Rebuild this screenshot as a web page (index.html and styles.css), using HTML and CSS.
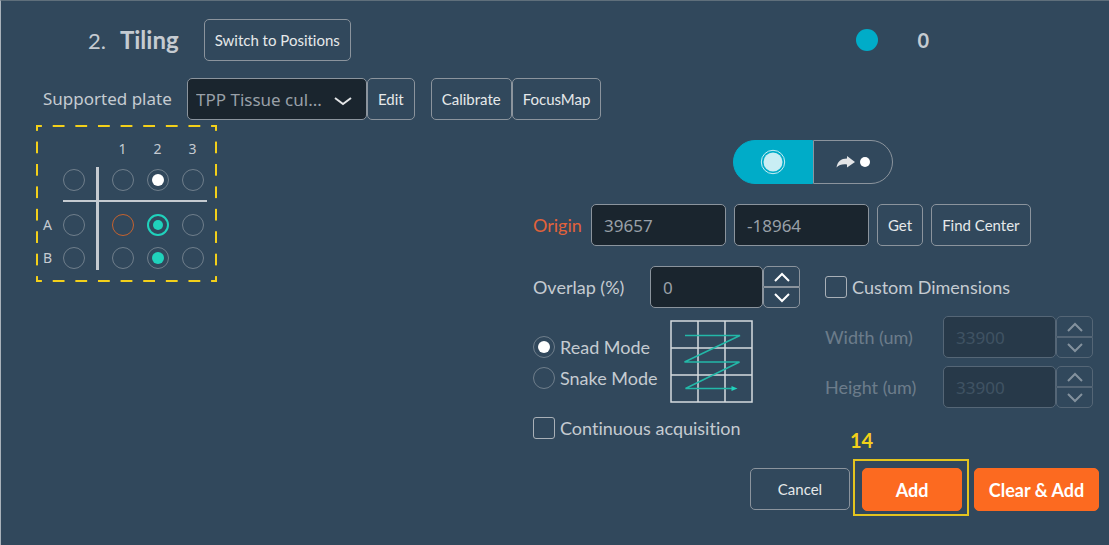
FILE: index.html
```
<!DOCTYPE html>
<html lang="en">
<head>
    <meta charset="UTF-8">
    <meta name="viewport" content="width=device-width, initial-scale=1.0">
    <title>Tiling</title>
    <link rel="stylesheet" href="styles.css">
</head>
<body>
    <header class="header">
        <h1 class="title"><span class="step">2.</span>Tiling</h1>
        <button type="button" class="btn">Switch to Positions</button>
        <div class="counter"><span class="counter-dot"></span>0</div>
    </header>

    <div class="plate-bar">
        <label for="plate" class="plate-label">Supported plate</label>
        <div class="select">
            <select id="plate">
                <option>TPP Tissue cul...</option>
            </select>
            <svg viewBox="0 0 18 10" width="18" height="10" aria-hidden="true"><path d="M1 2l8 6 8-6"/></svg>
        </div>
        <button type="button" class="btn">Edit</button>
        <button type="button" class="btn calibrate">Calibrate</button>
        <button type="button" class="btn">FocusMap</button>
    </div>

    <main class="main">
        <!-- Well selection -->
        <section class="plate">
            <span class="col c1">1</span>
            <span class="col c2">2</span>
            <span class="col c3">3</span>

            <input type="checkbox" class="well all" aria-label="All wells">
            <input type="checkbox" class="well c1" aria-label="Column 1">
            <input type="checkbox" class="well c2" aria-label="Column 2" checked>
            <input type="checkbox" class="well c3" aria-label="Column 3">

            <span class="line-h"></span>
            <span class="line-v"></span>

            <span class="row row-a">A</span>
            <input type="checkbox" class="well row-a all" aria-label="Row A">
            <input type="checkbox" class="well row-a c1 origin-well" aria-label="A1">
            <input type="checkbox" class="well row-a c2 green current" aria-label="A2" checked>
            <input type="checkbox" class="well row-a c3" aria-label="A3">

            <span class="row row-b">B</span>
            <input type="checkbox" class="well row-b all" aria-label="Row B">
            <input type="checkbox" class="well row-b c1" aria-label="B1">
            <input type="checkbox" class="well row-b c2 green" aria-label="B2" checked>
            <input type="checkbox" class="well row-b c3" aria-label="B3">
        </section>

        <!-- Tiling settings -->
        <section class="settings">
            <div class="toggle">
                <button type="button" class="toggle-btn active" aria-label="Whole well">
                    <svg viewBox="0 0 26 26" width="26" height="26"><circle cx="13" cy="13" r="11.7" fill="none" stroke="#c9eef4" stroke-width="1"/><circle cx="13" cy="13" r="9.5" fill="#c9eef4"/></svg>
                </button>
                <button type="button" class="toggle-btn" aria-label="Move to position">
                    <svg viewBox="0 0 34 14" width="34" height="14"><path d="M.5 12.5C1.500 6.500 5 3.500 11 3.500V1l8 6-8 5.500V9.500C6.500 9 3 9.800.5 12.500z" fill="#e3e5e7"/><circle cx="29" cy="7" r="5" fill="#fff"/></svg>
                </button>
            </div>

            <div class="origin">
                <label for="origin-x" class="origin-label">Origin</label>
                <input type="text" id="origin-x" class="field" value="39657">
                <input type="text" class="field" aria-label="Origin Y" value="-18964">
                <button type="button" class="btn">Get</button>
                <button type="button" class="btn">Find Center</button>
            </div>

            <div class="columns">
                <div class="column-left">
                    <div class="number">
                        <label for="overlap">Overlap (%)</label>
                        <input type="text" id="overlap" class="field" value="0">
                        <div class="spinner">
                            <button type="button" aria-label="Increase overlap"><svg viewBox="0 0 16 10" width="16" height="10"><path d="M1 9l7-7 7 7"/></svg></button>
                            <button type="button" aria-label="Decrease overlap"><svg viewBox="0 0 16 10" width="16" height="10"><path d="M1 1l7 7 7-7"/></svg></button>
                        </div>
                    </div>

                    <div class="modes">
                        <div class="mode-list">
                            <label class="check"><input type="radio" name="mode" checked>Read Mode</label>
                            <label class="check"><input type="radio" name="mode">Snake Mode</label>
                        </div>
                        <svg class="path" viewBox="0 0 83 83" width="83" height="83" aria-hidden="true">
                            <path d="M1 1h81v81H1zM28 1v81M55 1v81M1 28h81M1 55h81" fill="none" stroke="#d5dade" stroke-width="1.500"/>
                            <path d="M15 15.500h55L14.500 42h55L15.500 68.500H63" fill="none" stroke="#23b8a8" stroke-width="1.500"/>
                            <path d="M61.500 66l6 2.500-6 2.500z" fill="#20d2bc"/>
                        </svg>
                    </div>

                    <label class="check"><input type="checkbox">Continuous acquisition</label>
                </div>

                <div class="column-right">
                    <label class="check custom"><input type="checkbox">Custom Dimensions</label>
                    <div class="number disabled">
                        <label for="width">Width (um)</label>
                        <input type="text" id="width" class="field" value="33900" disabled>
                        <div class="spinner">
                            <button type="button" aria-label="Increase width" disabled><svg viewBox="0 0 16 10" width="16" height="10"><path d="M1 9l7-7 7 7"/></svg></button>
                            <button type="button" aria-label="Decrease width" disabled><svg viewBox="0 0 16 10" width="16" height="10"><path d="M1 1l7 7 7-7"/></svg></button>
                        </div>
                    </div>
                    <div class="number disabled">
                        <label for="height">Height (um)</label>
                        <input type="text" id="height" class="field" value="33900" disabled>
                        <div class="spinner">
                            <button type="button" aria-label="Increase height" disabled><svg viewBox="0 0 16 10" width="16" height="10"><path d="M1 9l7-7 7 7"/></svg></button>
                            <button type="button" aria-label="Decrease height" disabled><svg viewBox="0 0 16 10" width="16" height="10"><path d="M1 1l7 7 7-7"/></svg></button>
                        </div>
                    </div>
                </div>
            </div>
        </section>
    </main>

    <footer class="footer">
        <button type="button" class="btn cancel">Cancel</button>
        <div class="marked">
            <span class="mark">14</span>
            <button type="button" class="btn primary">Add</button>
        </div>
        <button type="button" class="btn primary wide">Clear &amp; Add</button>
    </footer>
</body>
</html>
```
FILE: styles.css
```
* {
    box-sizing: border-box;
}

body {
    margin: 0;
    min-height: 100vh;
    padding: 18px 10px 20px 0;
    border-top: 1px solid #5f6f7b;
    border-left: 1px solid #a9b2ba;
    background: #31485c;
    color: #c5cbd1;
    font-family: Lato, sans-serif;
    font-size: 18px;
    line-height: 22px;
    font-variant-ligatures: none;
}

button,
input,
select {
    margin: 0;
    font-family: inherit;
    font-variant-ligatures: inherit;
}

/* BUTTONS */
.btn {
    height: 42px;
    padding: 0 10px;
    border: 1px solid #8b949d;
    border-radius: 5px;
    background: transparent;
    color: #e6e8ea;
    font-size: 15px;
    white-space: nowrap;
}

.primary {
    width: 100px;
    height: 43px;
    border-color: #fc6a20;
    background: #fc6a20;
    color: #fff;
    font-size: 18px;
    font-weight: bold;
}

.cancel {
    width: 100px;
}

.wide {
    width: 125px;
}

/* HEADER */
.header {
    display: flex;
    align-items: center;
    padding-left: 87px;
}

.title {
    margin: 0 25px 0 0;
    font-size: 24px;
}

.step {
    margin-right: 14px;
    font-size: 22px;
    font-weight: normal;
}

.counter {
    display: flex;
    align-items: center;
    gap: 39px;
    margin-left: auto;
    margin-right: 170px;
    font-size: 20px;
    font-weight: bold;
}

.counter-dot {
    width: 22px;
    height: 22px;
    border-radius: 50%;
    background: #00acc8;
}

/* PLATE BAR */
.plate-bar {
    display: flex;
    align-items: center;
    margin-top: 17px;
    padding-left: 42px;
}

.plate-label {
    width: 144px;
    font-family: "Noto Sans", sans-serif;
    font-size: 17px;
}

.select {
    position: relative;
    width: 180px;
}

.select select {
    width: 100%;
    height: 42px;
    padding: 0 8px;
    border: 1px solid #8b949d;
    border-radius: 5px;
    appearance: none;
    background: #1a252e;
    color: #99a0a8;
    font-family: "Noto Sans", sans-serif;
    font-size: 17px;
}

.select svg {
    position: absolute;
    top: 18px;
    right: 15px;
    fill: none;
    stroke: #e3e5e7;
    stroke-width: 2;
    pointer-events: none;
}

.calibrate {
    margin-left: 16px;
}

/* WELLS */
.main {
    display: flex;
    justify-content: space-between;
    align-items: flex-start;
    padding: 5px 6px 0 35px;
}

.plate {
    display: grid;
    grid-template-columns: 23px 30px 16px 35px 35px 35px;
    grid-template-rows: 24px 37px 6px 42px 24px;
    place-items: center;
    width: 181px;
    padding: 12px 0;
    font-family: "Noto Sans", sans-serif;
    font-size: 14px;
    /* long dashes, an L in every corner */
    background:
        linear-gradient(90deg, #f3d01a 6px, transparent 6px calc(100% - 6px), #f3d01a calc(100% - 6px)) top left / 23px 2px round no-repeat,
        linear-gradient(90deg, #f3d01a 6px, transparent 6px calc(100% - 6px), #f3d01a calc(100% - 6px)) bottom left / 23px 2px round no-repeat,
        linear-gradient(#f3d01a 6px, transparent 6px calc(100% - 6px), #f3d01a calc(100% - 6px)) top left / 2px 22px no-repeat round,
        linear-gradient(#f3d01a 6px, transparent 6px calc(100% - 6px), #f3d01a calc(100% - 6px)) top right / 2px 22px no-repeat round;
}

.row { grid-column: 1; }
.all { grid-column: 2; }
.c1 { grid-column: 4; }
.c2 { grid-column: 5; }
.c3 { grid-column: 6; }

.col { grid-row: 1; }
.well { grid-row: 2; }
.row-a { grid-row: 4; }
.row-b { grid-row: 5; }

.line-h {
    grid-area: 3 / 2 / 4 / 7;
    width: 144px;
    height: 2px;
    background: #c5cbd1;
}

.line-v {
    grid-area: 2 / 3 / 6 / 4;
    align-self: end;
    width: 3px;
    height: 103px;
    background: #c5cbd1;
}

.well,
.check input {
    display: grid;
    place-items: center;
    flex: none;
    width: 22px;
    height: 22px;
    border: 1px solid #6f7e8b;
    border-radius: 50%;
    appearance: none;
}

.well:checked::before,
.check input:checked::before {
    content: '';
    width: 12px;
    height: 12px;
    border-radius: 50%;
    background: #fff;
}

.green:checked::before {
    background: #20d2bc;
}

.current {
    border: 2px solid #20d2bc;
}

.current:checked::before {
    width: 10px;
    height: 10px;
}

.origin-well {
    border-color: #c4622f;
}

/* SETTINGS */
.settings {
    width: 560px;
    padding-top: 15px;
}

.toggle {
    display: flex;
    width: 160px;
    margin: 0 auto;
}

.toggle-btn {
    display: flex;
    align-items: center;
    justify-content: center;
    flex: 1;
    height: 44px;
    padding: 0;
    border: 1px solid #8b949d;
    border-radius: 0 22px 22px 0;
    background: transparent;
}

.toggle-btn.active {
    border-color: #00acc8;
    border-radius: 22px 0 0 22px;
    background: #00acc8;
}

.field {
    height: 42px;
    padding: 0 12px;
    border: 1px solid #8b949d;
    border-radius: 5px;
    background: #1a252e;
    color: #99a0a8;
    font-family: "Noto Sans", sans-serif;
    font-size: 17px;
}

.origin {
    display: flex;
    align-items: center;
    gap: 8px;
    margin-top: 20px;
}

.origin .field {
    width: 135px;
}

.origin-label {
    width: 50px;
    color: #e2623a;
}

.columns {
    display: grid;
    grid-template-columns: 267px 1fr;
    gap: 25px;
    margin-top: 20px;
}

.column-right {
    display: flex;
    flex-direction: column;
    gap: 8px;
}

.number {
    display: flex;
    align-items: center;
}

.number label {
    flex: 1;
}

.number .field {
    width: 113px;
}

.disabled {
    opacity: 0.4;
}

.disabled .field {
    color: #56636f;
}

.spinner {
    display: flex;
    flex-direction: column;
    width: 37px;
}

.spinner button {
    display: flex;
    align-items: center;
    justify-content: center;
    height: 21px;
    padding: 0;
    border: 1px solid #8b949d;
    border-radius: 5px 5px 0 0;
    background: transparent;
}

.spinner button:last-child {
    border-radius: 0 0 5px 5px;
}

.spinner path {
    fill: none;
    stroke: #fff;
    stroke-width: 2;
}

.check {
    display: flex;
    align-items: center;
    gap: 5px;
}

.check input[type="checkbox"] {
    border-color: #a9b0b7;
    border-radius: 3px;
}

.custom {
    height: 42px;
}

.modes {
    display: flex;
    gap: 12px;
    margin: 12px 0 14px;
}

.mode-list {
    display: flex;
    flex-direction: column;
    gap: 9px;
    padding-top: 16px;
}

/* FOOTER */
.footer {
    display: flex;
    justify-content: flex-end;
    gap: 12px;
    margin-top: 29px;
}

.marked {
    position: relative;
}

/* frame around the Add button */
.marked::after {
    content: '';
    position: absolute;
    inset: -9px -7px -5px -9px;
    border: 2px solid #e3c41f;
    pointer-events: none;
}

.mark {
    position: absolute;
    top: -39px;
    left: -12px;
    color: #f3d01a;
    font-size: 20px;
    font-weight: bold;
}
```
